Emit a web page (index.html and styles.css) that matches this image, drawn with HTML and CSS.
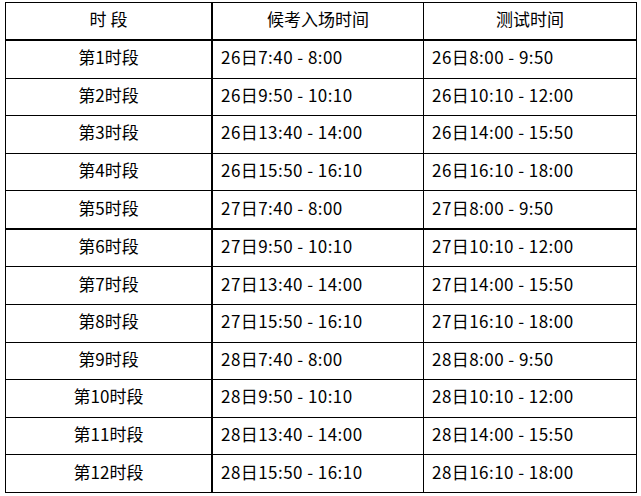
FILE: index.html
```html
<!DOCTYPE html>
<html lang="zh-CN">
<head>
<meta charset="utf-8">
<title>时段安排</title>
<link rel="stylesheet" href="styles.css">
</head>
<body>
<table class="schedule">
  <thead>
    <tr class="head-row">
      <th class="c1">时&nbsp;段</th>
      <th class="c2">候考入场时间</th>
      <th class="c3">测试时间</th>
    </tr>
  </thead>
  <tbody>
    <tr><td class="c1">第1时段</td><td class="c2">26日7:40 - 8:00</td><td class="c3">26日8:00 - 9:50</td></tr>
    <tr><td class="c1">第2时段</td><td class="c2">26日9:50 - 10:10</td><td class="c3">26日10:10 - 12:00</td></tr>
    <tr><td class="c1">第3时段</td><td class="c2">26日13:40 - 14:00</td><td class="c3">26日14:00 - 15:50</td></tr>
    <tr><td class="c1">第4时段</td><td class="c2">26日15:50 - 16:10</td><td class="c3">26日16:10 - 18:00</td></tr>
    <tr class="group-end"><td class="c1">第5时段</td><td class="c2">27日7:40 - 8:00</td><td class="c3">27日8:00 - 9:50</td></tr>
    <tr><td class="c1">第6时段</td><td class="c2">27日9:50 - 10:10</td><td class="c3">27日10:10 - 12:00</td></tr>
    <tr><td class="c1">第7时段</td><td class="c2">27日13:40 - 14:00</td><td class="c3">27日14:00 - 15:50</td></tr>
    <tr><td class="c1">第8时段</td><td class="c2">27日15:50 - 16:10</td><td class="c3">27日16:10 - 18:00</td></tr>
    <tr><td class="c1">第9时段</td><td class="c2">28日7:40 - 8:00</td><td class="c3">28日8:00 - 9:50</td></tr>
    <tr><td class="c1">第10时段</td><td class="c2">28日9:50 - 10:10</td><td class="c3">28日10:10 - 12:00</td></tr>
    <tr><td class="c1">第11时段</td><td class="c2">28日13:40 - 14:00</td><td class="c3">28日14:00 - 15:50</td></tr>
    <tr><td class="c1">第12时段</td><td class="c2">28日15:50 - 16:10</td><td class="c3">28日16:10 - 18:00</td></tr>
  </tbody>
</table>
</body>
</html>
```

FILE: styles.css
```css
html, body {
  margin: 0;
  padding: 0;
  background: #fff;
}

body {
  padding: 2px 0 0 5px;
  font-family: "Noto Sans CJK SC", "Noto Sans", sans-serif;
  font-size: 17px;
  color: #000;
}

.schedule {
  border-collapse: separate;
  border-spacing: 0;
  border-top: 1px solid #000;
  border-left: 1px solid #000;
  table-layout: fixed;
  width: 632px;
}

.schedule th,
.schedule td {
  border-right: 1px solid #000;
  border-bottom: 1px solid #000;
  padding: 0 0 4px 0;
  font-weight: normal;
  line-height: 20px;
  white-space: nowrap;
  vertical-align: middle;
}

.schedule .c1 {
  width: 205px;
  text-align: center;
  border-right-width: 2px;
}

.schedule .c2 {
  width: 211px;
  text-align: left;
  padding-left: 8px;
  box-sizing: border-box;
}

.schedule .c3 {
  text-align: left;
  padding-left: 8px;
}

.schedule td.c2,
.schedule td.c3 {
  letter-spacing: 0.45px;
}

.schedule th.c2,
.schedule th.c3 {
  text-align: center;
  padding-left: 0;
}

.head-row th {
  height: 32px;
  border-bottom-width: 2px;
}

.schedule tbody tr {
  height: 37.58px;
}

.schedule tbody td {
  height: 32.58px;
}

.group-end td {
  border-bottom-width: 2px;
}
```
